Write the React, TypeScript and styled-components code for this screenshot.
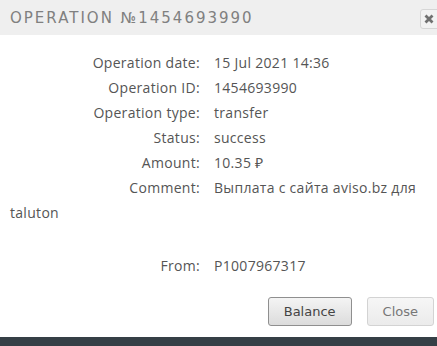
import styled, { createGlobalStyle } from 'styled-components'

const GlobalStyle = createGlobalStyle`
  html, body {
    margin: 0;
    padding: 0;
    background: #fff;
    overflow: hidden;
  }
`

const rows: [string, string][] = [
  ['Operation date:', '15 Jul 2021 14:36'],
  ['Operation ID:', '1454693990'],
  ['Operation type:', 'transfer'],
  ['Status:', 'success'],
  ['Amount:', '10.35 ₽'],
  ['Comment:', 'Выплата с сайта aviso.bz для taluton'],
]

function App() {
  return (
    <>
      <GlobalStyle />
      <DialogStyled>
        <HeaderStyled>
          <TitleStyled>Operation №1454693990</TitleStyled>
          <CloseIconStyled>
            <svg width='10' height='10' viewBox='0 0 10 10'>
              <path d='M1.5 1.5 L8.5 8.5 M8.5 1.5 L1.5 8.5' stroke='#707070' strokeWidth='2.8' />
            </svg>
          </CloseIconStyled>
        </HeaderStyled>
        <BodyStyled>
          {rows.map(([label, value]) => (
            <RowStyled key={label}>
              <LabelStyled>{label}</LabelStyled>
              {value}
            </RowStyled>
          ))}
          <RowStyled $gap>
            <LabelStyled>From:</LabelStyled>
            P1007967317
          </RowStyled>
        </BodyStyled>
        <FooterStyled>
          <ButtonStyled>Balance</ButtonStyled>
          <ButtonStyled $muted>Close</ButtonStyled>
        </FooterStyled>
      </DialogStyled>
      <BottomBarStyled />
    </>
  )
}

const DialogStyled = styled.div`
  width: 437px;
  height: 337px;
  display: flex;
  flex-direction: column;
  background: #fff;
`

const HeaderStyled = styled.div`
  height: 35px;
  background: #efefef;
  display: flex;
  align-items: center;
  justify-content: space-between;
  padding-left: 10px;
  box-sizing: border-box;
`

const TitleStyled = styled.div`
  font-family: 'DejaVu Sans', sans-serif;
  font-size: 15px;
  text-transform: uppercase;
  letter-spacing: 2px;
  color: #808080;
  margin-top: 1px;
`

const CloseIconStyled = styled.div`
  width: 22px;
  height: 20px;
  margin-right: -5px;
  margin-top: 3px;
  border: 1px solid #d6d6d6;
  border-radius: 3px;
  background: #f2f2f2;
  display: flex;
  align-items: center;
  justify-content: center;
  padding-right: 4px;
  box-sizing: border-box;
`

const BodyStyled = styled.div`
  flex: 1;
  padding: 15px 10px 0 10px;
  font-family: 'Open Sans', sans-serif;
  font-size: 14px;
  letter-spacing: 0.3px;
  color: #555;
`

const RowStyled = styled.div<{ $gap?: boolean }>`
  line-height: 25px;
  margin-top: ${(p) => (p.$gap ? '28px' : '0')};
`

const LabelStyled = styled.span`
  display: inline-block;
  width: 190px;
  text-align: right;
  margin-right: 14px;
`

const FooterStyled = styled.div`
  display: flex;
  justify-content: flex-end;
  gap: 15px;
  padding: 0 3px 11px 0;
`

const ButtonStyled = styled.button<{ $muted?: boolean }>`
  height: 29px;
  padding: 0 15px;
  font-family: 'DejaVu Sans', sans-serif;
  font-size: 13px;
  border-radius: 3px;
  border: 1px solid ${(p) => (p.$muted ? '#d3d3d3' : '#8f8f8f')};
  color: ${(p) => (p.$muted ? '#777' : '#444')};
  background: ${(p) =>
    p.$muted
      ? 'linear-gradient(#f6f6f6, #ebebeb)'
      : 'linear-gradient(#f4f4f4, #dcdcdc)'};
`

const BottomBarStyled = styled.div`
  height: 9px;
  background: #353f46;
`

export default App
